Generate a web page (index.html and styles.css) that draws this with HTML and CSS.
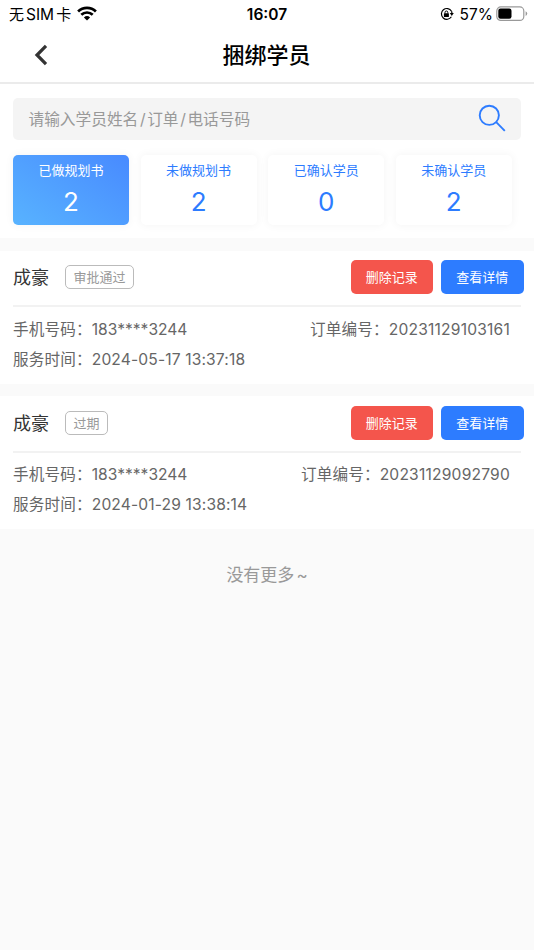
FILE: index.html
```html
<!DOCTYPE html>
<html lang="zh-CN">
<head>
<meta charset="utf-8">
<title>捆绑学员</title>
<link rel="stylesheet" href="styles.css">
</head>
<body>
<div class="status">
  <div class="status-left"><span class="carrier">无<b>SIM</b>卡</span>
    <svg class="wifi" width="20" height="15" viewBox="0 0 20 15"><g fill="none" stroke="#000" stroke-width="2.7"><path d="M1.1 5.5a12.7 12.7 0 0 1 17.8 0"/><path d="M4.3 8.8a8.2 8.2 0 0 1 11.4 0"/></g><path d="M10 14.5 6.9 11.5a4.5 4.5 0 0 1 6.2 0Z"/></svg>
  </div>
  <div class="clock">16:07</div>
  <div class="status-right">
    <svg class="lock" width="14" height="14" viewBox="0 0 14 14"><path d="M11.4 9.8A5.4 5.4 0 1 1 11.5 4.2" fill="none" stroke="#000" stroke-width="1.2"/><path d="M9.8 6.1h4L11.8 9z"/><path d="M11.5 4.2q.4.8.4 2" fill="none" stroke="#000" stroke-width="1.2"/><rect x="3.9" y="6.2" width="5" height="3.8" rx=".6"/><path d="M5 6.5V5.4a1.4 1.4 0 0 1 2.8 0v1.1" fill="none" stroke="#000"/></svg>
    <span class="percent">57%</span>
    <svg class="battery" width="32" height="16" viewBox="0 0 32 16"><rect x=".8" y=".9" width="27" height="13.5" rx="4" fill="none" stroke="#999" stroke-width="1.2"/><rect x="2.3" y="2.5" width="13.2" height="10.2" rx="2.2"/><path d="M29.6 5.2q1.6.7 1.6 2.4t-1.6 2.4z" fill="#999"/></svg>
  </div>
</div>
<header class="header">
  <svg class="back" width="14" height="22" viewBox="0 0 14 22"><path d="M12 1.9 3 11l9 9.1" fill="none" stroke="#333" stroke-width="3.2"/></svg>
  <h1>捆绑学员</h1>
</header>
<section class="top">
  <div class="search"><span>请输入学员姓名<i>/</i>订单<i>/</i>电话号码</span>
    <svg width="28" height="28" viewBox="0 0 28 28" fill="none" stroke="#2d7cff" stroke-width="1.9"><circle cx="11.3" cy="11.3" r="9.6"/><path d="m18.2 18.2 8.6 8.6"/></svg>
  </div>
  <div class="stats">
    <div class="stat active"><span>已做规划书</span><strong>2</strong></div>
    <div class="stat"><span>未做规划书</span><strong>2</strong></div>
    <div class="stat"><span>已确认学员</span><strong>0</strong></div>
    <div class="stat"><span>未确认学员</span><strong>2</strong></div>
  </div>
</section>
<main class="list">
  <article class="record">
    <div class="record-head"><h2>成豪</h2><span class="tag">审批通过</span><div class="actions"><button class="danger">删除记录</button><button class="primary">查看详情</button></div></div>
    <div class="row"><p><span class="label">手机号码：</span><span class="phone">183****3244</span></p><p><span class="label">订单编号：</span><span class="order">20231129103161</span></p></div>
    <div class="row"><p><span class="label">服务时间：</span><span class="date">2024-05-17 13:37:18</span></p></div>
  </article>
  <article class="record">
    <div class="record-head"><h2>成豪</h2><span class="tag">过期</span><div class="actions"><button class="danger">删除记录</button><button class="primary">查看详情</button></div></div>
    <div class="row"><p><span class="label">手机号码：</span><span class="phone">183****3244</span></p><p><span class="label">订单编号：</span><span class="order">20231129092790</span></p></div>
    <div class="row"><p><span class="label">服务时间：</span><span class="date">2024-01-29 13:38:14</span></p></div>
  </article>
</main>
<p class="end">没有更多<span>~</span></p>
</body>
</html>
```
FILE: styles.css
```css
* { box-sizing: border-box; }
body { margin: 0; min-height: 950px; background: #fafafa; color: #666; font-family: Inter, "Noto Sans CJK SC", sans-serif; }
h1, h2, p { margin: 0; font-weight: 400; }
.status { display: grid; grid-template-columns: 1fr auto 1fr; align-items: center; height: 28px; padding: 0 7px 0 9px; background: #fff; color: #000; font-size: 15.5px; line-height: 28px; }
.status-left, .status-right { display: flex; align-items: center; }
.carrier { font-size: 15px; white-space: nowrap; }
.carrier b { font-weight: 400; font-size: 15.5px; margin: 0 2px; }
.wifi { margin: -2px 0 0 6px; }
.clock { font-weight: 600; font-size: 15.5px; line-height: 29px; margin-left: -2px; }
.status-right { justify-content: flex-end; margin-right: -1px; }
.lock, .battery { margin-top: -2px; }
.lock { margin-right: -1px; }
.percent { margin: 0 3px 0 7px; line-height: 29px; }
.header { display: flex; align-items: center; height: 56px; padding-left: 34px; background: #fff; border-bottom: 2px solid #ebebeb; }
.header h1 { flex: 1; margin-right: 49px; text-align: center; color: #000; font-size: 22px; font-weight: 500; line-height: 54px; }
.top { height: 154px; padding: 14px 13px 0; background: #fff; }
.search { display: flex; align-items: center; justify-content: space-between; height: 41.5px; padding: 0 15px 0 15.5px; border-radius: 5px; background: #f4f4f4; color: #999; font-size: 15.7px; }
.search span { margin-top: -1px; }
.search svg { margin-top: -1px; }
.search i { font-style: normal; margin: 0 1.6px; }
.stats { display: flex; gap: 11.6px; margin-top: 15.5px; }
.stat { display: flex; flex-direction: column; align-items: center; width: 116px; height: 69.5px; padding-top: 5px; border-radius: 5px; background: #fff; box-shadow: 0 0 10px rgba(0, 0, 0, .05); color: #2d7cff; }
.stat span { font-size: 13px; line-height: 20px; }
.stat strong { font-weight: 400; font-size: 26px; line-height: 44px; }
.stat.active { background: linear-gradient(35deg, #58b3ff, #488aff); color: #fff; }
.record { height: 133px; margin-top: 12.7px; padding: 0 13px; background: #fff; }
.record-head { display: flex; align-items: center; height: 56.5px; border-bottom: 2px solid #f2f2f2; }
.record-head h2 { color: #333; font-size: 18px; line-height: 54px; }
.tag { margin: -1.5px 0 0 16px; height: 24px; padding: 0 7.5px; border: 1px solid #bbb; border-radius: 5px; color: #999; font-size: 13px; line-height: 22px; }
.actions { display: flex; gap: 8px; margin: -1.5px -2.5px 0 auto; }
button { width: 82.5px; height: 34px; padding: 0; border: 0; border-radius: 5px; color: #fff; font: 13px/34px Inter, "Noto Sans CJK SC", sans-serif; }
.danger { background: #f4554c; }
.primary { background: #2d7cff; }
.row { display: flex; justify-content: space-between; padding-right: 11px; height: 30px; font-size: 15.6px; line-height: 30px; }
.record-head + .row { margin-top: 7.5px; }
.label { letter-spacing: .15px; }
.order { letter-spacing: .2px; }
.date { letter-spacing: .14px; }
.end { margin-top: 33px; text-align: center; color: #999; font-size: 17px; line-height: 26px; }
.end span { margin-left: 2px; }
```
